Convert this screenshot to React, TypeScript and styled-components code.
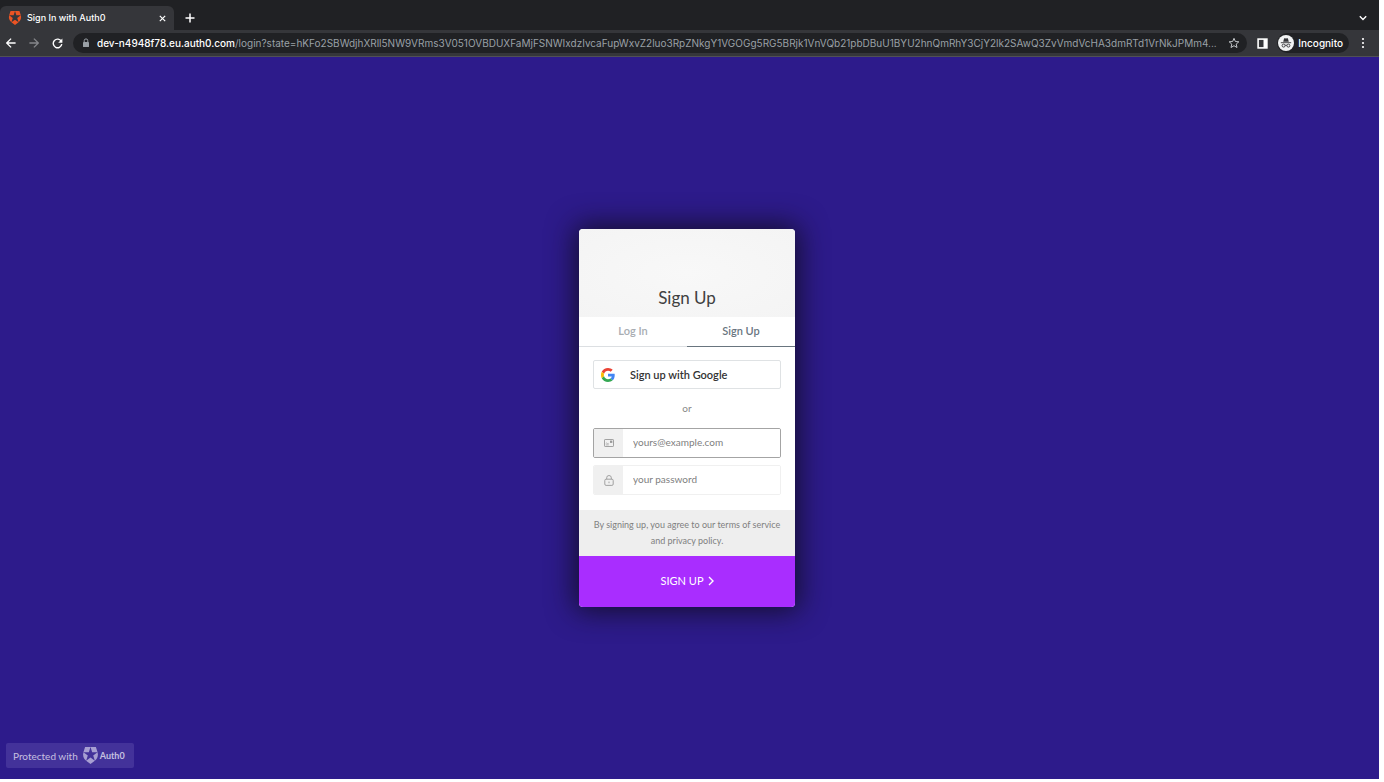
import React, { useState } from "react";
import styled, { createGlobalStyle } from "styled-components";

const GlobalStyle = createGlobalStyle`
  * { box-sizing: border-box; }
  body { margin: 0; background: #fff; }
  button, input { font: inherit; color: inherit; margin: 0; }
  button { border: 0; background: none; padding: 0; cursor: pointer; }
  svg { display: block; flex: none; }
`;

const Window = styled.div`
  display: flex;
  flex-direction: column;
  min-height: 100vh;
  border: solid #fff;
  border-width: 0 5px 3px 0;
  font-family: Inter, "Liberation Sans", sans-serif;
`;

const TabStrip = styled.div`
  display: flex;
  align-items: flex-end;
  height: 30px;
  padding-right: 9px;
  background: #202124;
  color: #fff;
`;

const BrowserTab = styled.div`
  display: flex;
  align-items: center;
  gap: 5px;
  width: 174px;
  height: 24px;
  padding: 0 8px;
  border-radius: 6px 6px 0 0;
  background: #35363a;
`;

const TabTitle = styled.span`
  flex: 1;
  font-size: 9px;
  font-weight: 500;
  line-height: 12px;
  white-space: nowrap;
`;

const IconButton = styled.button<{ $w?: number; $h?: number; $color?: string }>`
  display: flex;
  flex: none;
  align-items: center;
  justify-content: center;
  width: ${(p) => p.$w ?? 16}px;
  height: ${(p) => p.$h ?? 24}px;
  color: ${(p) => p.$color ?? "#fff"};
`;

const Spacer = styled.div`
  flex: 1;
`;

const Toolbar = styled.div`
  display: flex;
  align-items: center;
  height: 27px;
  padding: 0 8px 0 3px;
  border-bottom: 1px solid #505054;
  background: #35363a;
`;

const NavGroup = styled.div`
  display: flex;
  gap: 7px;
  margin-right: 8px;
`;

const AddressBar = styled.label`
  display: flex;
  flex: 1;
  align-items: center;
  min-width: 0;
  height: 20px;
  padding: 0 5px 0 8px;
  border-radius: 10px;
  background: #202124;
  font-size: 10px;
  line-height: 14px;
`;

const Domain = styled.span`
  margin-left: 6px;
  color: #fff;
  font-weight: 500;
`;

const PathInput = styled.input`
  flex: 1;
  min-width: 0;
  padding: 0;
  border: 0;
  outline: 0;
  background: none;
  color: #9aa0a6;
`;

const IncognitoChip = styled.button`
  display: flex;
  flex: none;
  align-items: center;
  gap: 4px;
  height: 20px;
  margin-right: 6px;
  padding: 0 6px 0 1px;
  border-radius: 10px;
  background: #202124;
  color: #fff;
  font-size: 10px;
  font-weight: 500;
  line-height: 14px;
`;

const Page = styled.main`
  display: grid;
  flex: 1;
  grid-template-rows: 1fr auto 1fr;
  justify-items: center;
  padding-right: 5px;
  background: #2d1b8b;
  font-family: Lato, "Open Sans", sans-serif;
`;

const Card = styled.form`
  grid-row: 2;
  width: 216px;
  overflow: hidden;
  border-radius: 4px;
  background: #fff;
  box-shadow: 0 0 28px 4px rgba(20, 14, 40, 0.95);
`;

const CardHeader = styled.header`
  display: flex;
  align-items: flex-end;
  justify-content: center;
  height: 88px;
  padding-bottom: 8px;
  background: radial-gradient(#f8f8f8, #f4f4f4);
`;

const Title = styled.h1`
  margin: 0;
  color: #404040;
  font-size: 17px;
  font-weight: 400;
  line-height: 22px;
`;

const Tabs = styled.div`
  display: grid;
  grid-template-columns: 1fr 1fr;
`;

const ModeTab = styled.button<{ $active: boolean }>`
  height: 30px;
  padding-bottom: 2px;
  border-bottom: 1px solid ${(p) => (p.$active ? "#69757f" : "#dcdfe2")};
  color: ${(p) => (p.$active ? "#69757f" : "#a8adb2")};
  font-size: 11px;
  font-weight: 600;
  line-height: 14px;
`;

const Fields = styled.div`
  display: flex;
  flex-direction: column;
  padding: 13px 14px 15px;
`;

const GoogleButton = styled.button`
  display: flex;
  align-items: center;
  gap: 15px;
  height: 29px;
  padding: 0 7px;
  border: 1px solid #dfe2e4;
  border-radius: 2px;
  color: #333;
  font-size: 11px;
  font-weight: 600;
  line-height: 14px;
`;

const Divider = styled.p`
  margin: 12px 0 13px;
  color: #888;
  font-size: 10px;
  line-height: 14px;
  text-align: center;
`;

const Field = styled.label<{ $focused?: boolean }>`
  display: flex;
  height: 30px;
  overflow: hidden;
  border: 1px solid ${(p) => (p.$focused ? "#a4a4a4" : "#f0f0f0")};
  border-radius: 2px;
  & + & { margin-top: 7px; }
`;

const FieldIcon = styled.span`
  display: flex;
  flex: none;
  align-items: center;
  justify-content: center;
  width: 29px;
  background: #f0f0f0;
  color: #999;
`;

const FieldInput = styled.input`
  flex: 1;
  min-width: 0;
  padding: 0 10px 2px;
  border: 0;
  outline: 0;
  background: #fff;
  color: #444;
  font-size: 10px;
  &::placeholder { color: #808080; opacity: 1; }
`;

const Terms = styled.p`
  margin: 0;
  padding: 7px 12px;
  background: #eee;
  color: #808080;
  font-size: 9px;
  line-height: 16px;
  text-align: center;
`;

const Submit = styled.button`
  display: flex;
  align-items: center;
  justify-content: center;
  gap: 4px;
  width: 100%;
  height: 51px;
  padding-bottom: 2px;
  background: #a92dff;
  color: #fff;
  font-size: 11px;
  line-height: 14px;
`;

const Badge = styled.a`
  display: flex;
  grid-row: 3;
  align-items: center;
  align-self: end;
  justify-self: start;
  height: 25px;
  margin: 0 0 11px 6px;
  padding: 0 9px 0 7px;
  border-radius: 2px;
  background: #43329a;
  color: #c6c0e0;
  font-size: 10px;
  line-height: 14px;
  text-decoration: none;
`;

const BadgeBrand = styled.span`
  display: flex;
  align-items: center;
  gap: 1px;
  margin-left: 4px;
  font-size: 9px;
  font-weight: 700;
`;

const Auth0Mark = ({ size, color }: { size: number; color: string }) => (
  <svg width={size} height={size} viewBox="0 0 24 24" fill={color} aria-hidden="true">
    <path d="M21.98 7.448L19.62 0H4.347L2.02 7.448c-1.352 4.312.03 9.206 3.815 12.015L12.007 24l6.157-4.552c3.755-2.81 5.182-7.688 3.815-12.015l-6.16 4.58 2.343 7.45-6.157-4.597-6.158 4.58 2.358-7.433-6.188-4.55 7.63-.045L12.008 0l2.356 7.404 7.615.044z" />
  </svg>
);

const stroke = (width: number) => ({
  fill: "none",
  stroke: "currentColor",
  strokeWidth: width,
});

const Close = () => (
  <svg width="7" height="7" viewBox="0 0 7 7" {...stroke(1.2)}>
    <path d="M.8.8l5.4 5.4M6.2.8L.8 6.2" />
  </svg>
);

const Plus = () => (
  <svg width="10" height="10" viewBox="0 0 10 10" {...stroke(1.5)}>
    <path d="M5 .5v9M.5 5h9" />
  </svg>
);

const ChevronDown = () => (
  <svg width="8" height="6" viewBox="0 0 8 6" {...stroke(1.4)}>
    <path d="M.8 1.2L4 4.4l3.2-3.2" />
  </svg>
);

const Arrow = ({ flip }: { flip?: boolean }) => (
  <svg width="10" height="10" viewBox="0 0 10 10" {...stroke(1.3)}>
    <path d={flip ? "M.4 5h8.8M4.9.6L9.3 5 4.9 9.4" : "M9.6 5H.8M5.1.6L.7 5l4.4 4.4"} />
  </svg>
);

const Reload = () => (
  <svg width="11" height="11" viewBox="0 0 11 11" {...stroke(1.4)}>
    <path d="M9.3 3.3A4.3 4.3 0 1 0 9.8 6.2" />
    <path d="M10.4.6v4.2H6.2z" fill="currentColor" stroke="none" />
  </svg>
);

const Padlock = () => (
  <svg width="10" height="10" viewBox="0 0 10 10" aria-hidden="true">
    <path d="M3.2 4.2V2.7a1.8 1.8 0 0 1 3.6 0v1.5" fill="none" stroke="#9aa0a6" />
    <rect x="2" y="3.9" width="6" height="5.2" rx=".7" fill="#9aa0a6" />
  </svg>
);

const Star = () => (
  <svg width="12" height="12" viewBox="0 0 24 24" {...stroke(2)}>
    <path d="M12 2.6l2.7 6.4 7 .6-5.3 4.6 1.6 6.8-6-3.6-6 3.6 1.6-6.8-5.3-4.6 7-.6z" />
  </svg>
);

const SidePanel = () => (
  <svg width="11" height="11" viewBox="0 0 11 11">
    <rect x="1.1" y="1.1" width="8.8" height="8.8" fill="none" stroke="currentColor" strokeWidth="1.6" />
    <rect x="6.5" y="1" width="3.5" height="9" fill="currentColor" />
  </svg>
);

const Incognito = () => (
  <svg width="16" height="16" viewBox="0 0 16 16" aria-hidden="true">
    <circle cx="8" cy="8" r="8" fill="#f1f3f4" />
    <path d="M5.2 6.7l.9-3.1c.1-.4.5-.5.8-.4L8 3.6l1.1-.4c.3-.1.7 0 .8.4l.9 3.1z" fill="#35363a" />
    <path d="M2.8 7.7h10.4" stroke="#35363a" strokeWidth=".9" />
    <g fill="none" stroke="#35363a" strokeWidth=".9">
      <circle cx="5.6" cy="10.6" r="1.5" />
      <circle cx="10.4" cy="10.6" r="1.5" />
      <path d="M7.1 10.4q.9-.6 1.8 0" />
    </g>
  </svg>
);

const Dots = () => (
  <svg width="4" height="12" viewBox="0 0 4 12" fill="currentColor">
    <circle cx="2" cy="2" r="1.1" />
    <circle cx="2" cy="6" r="1.1" />
    <circle cx="2" cy="10" r="1.1" />
  </svg>
);

const GoogleMark = () => (
  <svg width="14" height="14" viewBox="0 0 48 48" aria-hidden="true">
    <path fill="#EA4335" d="M24 9.5c3.54 0 6.71 1.22 9.21 3.6l6.85-6.85C35.9 2.38 30.47 0 24 0 14.62 0 6.51 5.38 2.56 13.22l7.98 6.19C12.43 13.72 17.74 9.5 24 9.5z" />
    <path fill="#4285F4" d="M46.98 24.55c0-1.57-.15-3.09-.38-4.55H24v9.02h12.94c-.58 2.96-2.26 5.48-4.78 7.18l7.73 6c4.51-4.18 7.09-10.36 7.09-17.65z" />
    <path fill="#FBBC05" d="M10.53 28.59c-.48-1.45-.76-2.99-.76-4.59s.27-3.14.76-4.59l-7.98-6.19C.92 16.46 0 20.12 0 24c0 3.88.92 7.54 2.56 10.78l7.97-6.19z" />
    <path fill="#34A853" d="M24 48c6.48 0 11.93-2.13 15.89-5.81l-7.73-6c-2.15 1.45-4.92 2.3-8.16 2.3-6.26 0-11.57-4.22-13.47-9.91l-7.98 6.19C6.51 42.62 14.62 48 24 48z" />
  </svg>
);

const MailIcon = () => (
  <svg width="10" height="8" viewBox="0 0 10 8" {...stroke(0.9)} aria-hidden="true">
    <rect x=".5" y=".5" width="9" height="7" rx=".6" />
    <path d="M1.8 4.4q.7-.8 1.4 0t1.4 0M1.8 5.9h3" strokeWidth=".7" />
    <rect x="6" y="1.6" width="2.3" height="2.3" fill="currentColor" stroke="none" />
  </svg>
);

const LockIcon = () => (
  <svg width="10" height="11" viewBox="0 0 10 11" {...stroke(0.9)} aria-hidden="true">
    <rect x=".8" y="4.2" width="8.4" height="6.2" rx="1.3" />
    <path d="M2.7 4.2V2.8a2.3 2.3 0 0 1 4.6 0v1.4M5 6.6v1.6" />
  </svg>
);

const ChevronRight = () => (
  <svg width="6" height="10" viewBox="0 0 6 10" {...stroke(1.4)} aria-hidden="true">
    <path d="M1 1l4 4-4 4" />
  </svg>
);

const PATH =
  "/login?state=hKFo2SBWdjhXRll5NW9VRms3V051OVBDUXFaMjFSNWIxdzIvcaFupWxvZ2luo3RpZNkgY1VGOGg5RG5BRjk1VnVQb21pbDBuU1BYU2hnQmRhY3CjY2lk2SAwQ3ZvVmdVcHA3dmRTd1VrNkJPMm4...";

export default function App() {
  const [mode, setMode] = useState<"login" | "signup">("signup");

  return (
    <>
      <GlobalStyle />
      <Window>
        <TabStrip>
          <BrowserTab>
            <Auth0Mark size={14} color="#eb5424" />
            <TabTitle>Sign In with Auth0</TabTitle>
            <IconButton $w={8} aria-label="Close tab"><Close /></IconButton>
          </BrowserTab>
          <IconButton $w={31} aria-label="New tab"><Plus /></IconButton>
          <Spacer />
          <IconButton $w={14} aria-label="Search tabs"><ChevronDown /></IconButton>
        </TabStrip>
        <Toolbar>
          <NavGroup>
            <IconButton aria-label="Back"><Arrow /></IconButton>
            <IconButton $color="#85868a" aria-label="Forward"><Arrow flip /></IconButton>
            <IconButton aria-label="Reload"><Reload /></IconButton>
          </NavGroup>
          <AddressBar>
            <Padlock />
            <Domain>dev-n4948f78.eu.auth0.com</Domain>
            <PathInput aria-label="Address" readOnly value={PATH} />
            <IconButton $h={20} $color="#c4c7ca" aria-label="Bookmark"><Star /></IconButton>
          </AddressBar>
          <IconButton $w={30} aria-label="Side panel"><SidePanel /></IconButton>
          <IncognitoChip><Incognito />Incognito</IncognitoChip>
          <IconButton aria-label="Menu"><Dots /></IconButton>
        </Toolbar>
        <Page>
          <Card onSubmit={(e) => e.preventDefault()}>
            <CardHeader><Title>Sign Up</Title></CardHeader>
            <Tabs>
              <ModeTab type="button" $active={mode === "login"} onClick={() => setMode("login")}>Log In</ModeTab>
              <ModeTab type="button" $active={mode === "signup"} onClick={() => setMode("signup")}>Sign Up</ModeTab>
            </Tabs>
            <Fields>
              <GoogleButton type="button"><GoogleMark />Sign up with Google</GoogleButton>
              <Divider>or</Divider>
              <Field $focused>
                <FieldIcon><MailIcon /></FieldIcon>
                <FieldInput type="email" aria-label="Email" placeholder="yours@example.com" />
              </Field>
              <Field>
                <FieldIcon><LockIcon /></FieldIcon>
                <FieldInput type="password" aria-label="Password" placeholder="your password" />
              </Field>
            </Fields>
            <Terms>By signing up, you agree to our terms of service<br />and privacy policy.</Terms>
            <Submit type="submit">SIGN UP<ChevronRight /></Submit>
          </Card>
          <Badge href="#auth0">
            Protected with
            <BadgeBrand><Auth0Mark size={17} color="#a79fd2" />Auth0</BadgeBrand>
          </Badge>
        </Page>
      </Window>
    </>
  );
}
